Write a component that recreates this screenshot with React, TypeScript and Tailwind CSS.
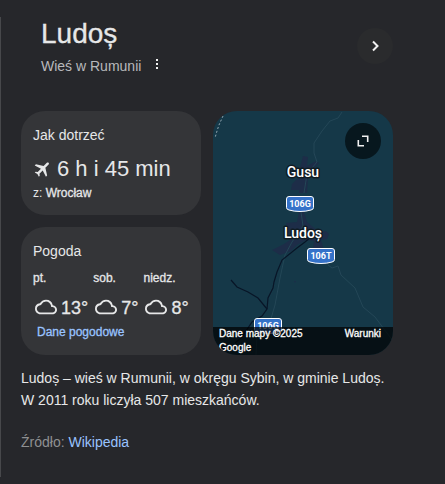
import type { ReactNode } from "react";
import { MdFlight, MdOutlineCloud } from "react-icons/md";

const FORECAST = [
  { day: "pt.", temp: "13°" },
  { day: "sob.", temp: "7°" },
  { day: "niedz.", temp: "8°" },
];

const ROAD_BADGES = [
  { label: "106G", x: 73, y: 85 },
  { label: "106T", x: 94, y: 137 },
  { label: "106G", x: 41, y: 207 },
];

const PLACES = [
  { name: "Gusu", x: 90, y: 66 },
  { name: "Ludoș", x: 90, y: 127 },
];

function Card({ title, children }: { title: string; children: ReactNode }) {
  return (
    <section className="rounded-3xl bg-[#343538] px-3 pt-3 pb-3.5">
      <h2 className="text-sm leading-6">{title}</h2>
      {children}
    </section>
  );
}

function Header() {
  return (
    <header className="flex items-start justify-between">
      <div className="pl-5">
        <h1 className="text-[28px] leading-[34px] [-webkit-text-stroke:0.3px]">
          Ludoș
        </h1>
        <div className="mt-1 flex items-center">
          <span className="text-sm leading-[22px] text-[#b8b9bc]">
            Wieś w Rumunii
          </span>
          <button type="button" aria-label="Więcej opcji" className="ml-2">
            <svg viewBox="0 0 16 16" className="size-4" fill="#f1f1f1">
              <rect x="7" y="1" width="2" height="2" />
              <rect x="7" y="5" width="2" height="2" />
              <rect x="7" y="9" width="2" height="2" />
            </svg>
          </button>
        </div>
      </div>
      <button
        type="button"
        aria-label="Dalej"
        className="mt-[11px] flex size-9 items-center justify-center rounded-full bg-[#2a2b2d]"
      >
        <svg viewBox="0 0 12 12" className="size-3" fill="none">
          <path d="M4 1.5 8.5 6 4 10.5" stroke="#f1f1f1" strokeWidth="2" />
        </svg>
      </button>
    </header>
  );
}

function DirectionsCard() {
  return (
    <Card title="Jak dotrzeć">
      <div className="mt-1.5 flex items-center gap-1 text-[22px] leading-8">
        <MdFlight className="size-5 rotate-45" />
        <span>6 h i 45 min</span>
      </div>
      <p className="text-xs leading-4">
        z: <span className="[-webkit-text-stroke:0.3px]">Wrocław</span>
      </p>
    </Card>
  );
}

function WeatherCard() {
  return (
    <Card title="Pogoda">
      <ul className="mt-[7px] flex gap-[5px]">
        {FORECAST.map(({ day, temp }) => (
          <li key={day}>
            <span className="block text-xs leading-4 [-webkit-text-stroke:0.3px]">
              {day}
            </span>
            <span className="mt-2.5 flex items-start gap-1 pl-0.5 text-lg leading-6 [-webkit-text-stroke:0.3px]">
              <MdOutlineCloud className="size-[22px]" />
              {temp}
            </span>
          </li>
        ))}
      </ul>
      <a
        href="#pogoda"
        className="mt-1 block pb-px pl-1 text-xs leading-4 text-[#99c3ff] [-webkit-text-stroke:0.3px]"
      >
        Dane pogodowe
      </a>
    </Card>
  );
}

function MapDrawing() {
  return (
    <svg
      viewBox="0 0 180 244"
      preserveAspectRatio="xMidYMid slice"
      className="absolute inset-0 h-full w-full"
      fill="none"
    >
      <rect width="180" height="244" fill="#153848" />

      {/* built-up areas */}
      <g fill="#1d2d48">
        <path d="M90 45 95 46 94 55 103 50 106 52 99 60 95 68 94 82H86V79L78 79 79 73 85 67 87 56Z" />
        <path d="M86 101H91L94 111 100 116 107 121 113 120 116 123 114 128 108 129 111 139 100 138 101 130 93 129 84 134 78 140 67 144 59 139 71 133 80 127 75 122 73 112 84 111Z" />
        <path d="M81 170 83 170 82 172Z" />
      </g>

      {/* rivers and minor roads */}
      <g stroke="#244757" strokeWidth="1">
        <path d="M129 1 125 7 117 10 109 20 101 32 101 42 104 51 94 63 91 82" />
        <path d="M88 101 90 115 79 131 72 144 67 167 62 194 57 211 44 224 43 244" />
        <path d="M115 154 119 157 125 155 128 164 142 177 150 196 162 206 180 230" />
      </g>
      <path d="M10 5 6 14 4 20 2 27" stroke="#93a6b0" strokeDasharray="2 2" />

      {/* railway */}
      <g stroke="#081527" strokeWidth="1.2">
        <path d="M105 120 92 131 84 137 69 149 64 161 61 171 60 177 55 187 54 198 49 205 39 211 29 226 22 232" />
        <path d="M18 169 24 176 35 181 45 187 54 198" />
      </g>

      {ROAD_BADGES.map(({ label, x, y }) => (
        <g key={`${label}-${y}`} transform={`translate(${x} ${y})`}>
          <path
            d="M3 .5H25Q27.5.5 27.5 3V11.5Q27.5 13.5 25 14 20 15.5 14 15.5T3 14Q.5 13.5.5 11.5V3Q.5.5 3 .5Z"
            fill="#3572c9"
            stroke="#fff"
            strokeWidth="1"
          />
          <text
            x="14"
            y="11"
            textAnchor="middle"
            fill="#fff"
            className="font-['Roboto',sans-serif] text-[9px] font-bold"
          >
            {label}
          </text>
        </g>
      ))}

      {PLACES.map(({ name, x, y }) => (
        <text
          key={name}
          x={x}
          y={y}
          textAnchor="middle"
          fill="#fff"
          stroke="#101c24"
          strokeWidth="3"
          strokeLinejoin="round"
          paintOrder="stroke"
          className="font-['Roboto',sans-serif] text-sm font-medium"
        >
          {name}
        </text>
      ))}
    </svg>
  );
}

function MapCard() {
  return (
    <section className="relative flex flex-col justify-between overflow-hidden rounded-3xl">
      <MapDrawing />
      <button
        type="button"
        aria-label="Rozwiń mapę"
        className="relative m-3 flex size-9 items-center justify-center self-end rounded-full bg-[#07171e]"
      >
        <svg viewBox="0 0 12 12" className="size-3" fill="none">
          <path
            d="M5 1.3H10.7V7M1.3 5V10.7H7"
            stroke="#f1f1f1"
            strokeWidth="1.6"
          />
        </svg>
      </button>
      <footer className="relative flex justify-between bg-black/70 pr-3 pl-1.5 text-[10px] leading-[14px] text-white [-webkit-text-stroke:0.3px]">
        <span className="w-[90px]">Dane mapy ©2025 Google</span>
        <a href="#warunki">Warunki</a>
      </footer>
    </section>
  );
}

export default function App() {
  return (
    <div className="min-h-screen bg-[#26272b] pt-[17px] font-['Liberation_Sans',Arial,sans-serif] text-[#e6e7e8]">
      <main className="border-l border-[#47484b] pr-[52px] pb-6 pl-5">
        <Header />

        <div className="mt-[34px] grid grid-cols-2 gap-3">
          <div className="flex flex-col gap-3">
            <DirectionsCard />
            <WeatherCard />
          </div>
          <MapCard />
        </div>

        <p className="mt-3 text-sm leading-[22px]">
          Ludoș – wieś w Rumunii, w okręgu Sybin, w gminie Ludoș. W 2011 roku
          liczyła 507 mieszkańców.
        </p>
        <p className="mt-5 text-sm leading-[22px] text-[#8f9092]">
          Źródło:{" "}
          <a href="#wikipedia" className="text-[#99c3ff]">
            Wikipedia
          </a>
        </p>
      </main>
    </div>
  );
}
